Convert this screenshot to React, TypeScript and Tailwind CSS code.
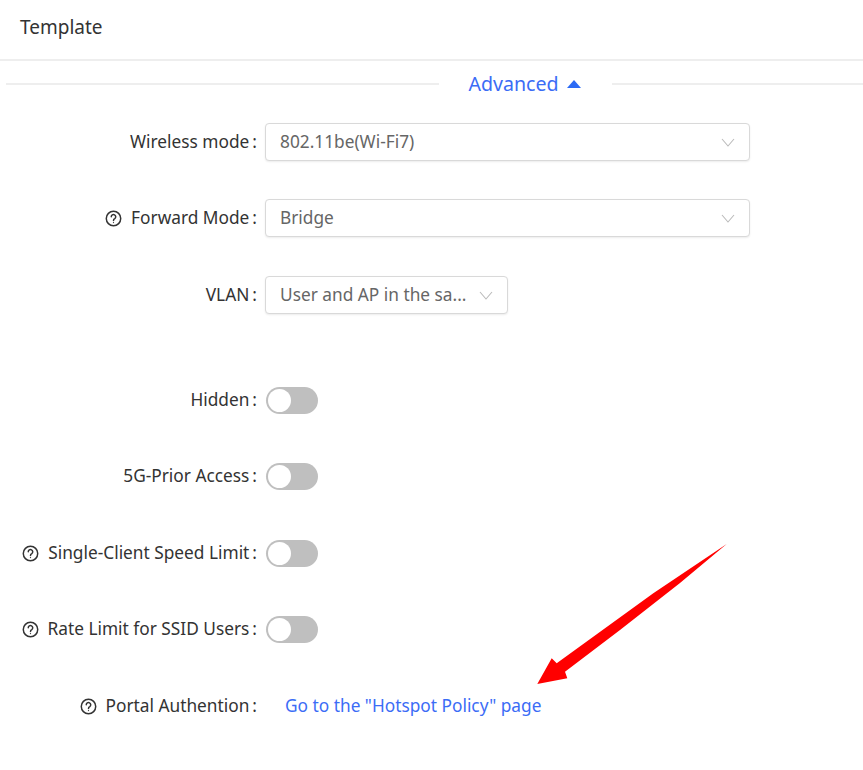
function Help() {
  return (
    <svg viewBox="0 0 16 16" className="w-[17px] h-[17px] mr-[9px] shrink-0" fill="none" stroke="#333" strokeWidth="1.4">
      <circle cx="8" cy="8" r="6.8" />
      <path d="M5.9 6.4a2.1 2.1 0 1 1 3.3 1.7c-.8.5-1.2.9-1.2 1.7" strokeLinecap="round" />
      <circle cx="8" cy="11.8" r=".6" fill="#333" stroke="none" />
    </svg>
  );
}

function Label({ text, help, up }: { text: string; help?: boolean; up?: boolean }) {
  return (
    <div className={`w-[265px] shrink-0 flex items-center justify-end pr-[7px] text-[#333] whitespace-nowrap ${up ? "pb-[1px]" : ""}`}>
      {help && <Help />}
      <span>{text}</span>
      <span className="ml-[3px] mr-[1px]">:</span>
    </div>
  );
}

function Select({ value, width }: { value: string; width: string }) {
  return (
    <div className={`${width} h-[38px] bg-white border border-[#d9d9d9] rounded-[4px] shadow-[0_1px_2px_rgba(0,0,0,0.08)] flex items-center justify-between pl-[14px] pr-[14px] text-[#666]`}>
      <span>{value}</span>
      <svg viewBox="0 0 14 9" className="w-[14px] h-[9px]" fill="none" stroke="#bbbbbb" strokeWidth="1.1">
        <path d="M1 1l6 7 6-7" />
      </svg>
    </div>
  );
}

function Toggle() {
  return (
    <div className="ml-[1px] w-[52px] h-[27px] rounded-full bg-[#bfbfbf] flex items-center pl-[2px]">
      <div className="w-[23px] h-[23px] rounded-full bg-white" />
    </div>
  );
}

export default function App() {
  return (
    <div className="relative w-[863px] h-[770px] bg-white overflow-hidden text-[17.3px]" style={{ fontFamily: '"Noto Sans", "Open Sans", sans-serif' }}>
      <div className="h-[61px] pl-[20px] pt-[13px] border-b-2 border-[#eeeeee] text-[19px] text-[#333]">Template</div>

      <div className="flex items-center h-[46px] pl-[6px]">
        <div className="w-[433px] h-[2px] bg-[#eeeeee]" />
        <div className="w-[173px] flex items-center justify-center gap-[8px] text-[#3b6cf6] text-[19.6px] pr-[2px]">
          <span className="pb-[1px]">Advanced</span>
          <svg viewBox="0 0 14 8" className="w-[14px] h-[8px]" fill="#2b6af5">
            <path d="M7 0l7 8H0z" />
          </svg>
        </div>
        <div className="flex-1 h-[2px] bg-[#eeeeee]" />
      </div>

      <div className="flex flex-col pt-[16px]">
        <div className="flex items-center h-[38px] mb-[38px]">
          <Label text="Wireless mode" />
          <Select value="802.11be(Wi-Fi7)" width="w-[485px]" />
        </div>
        <div className="flex items-center h-[38px] mb-[39px]">
          <Label text="Forward Mode" help />
          <Select value="Bridge" width="w-[485px]" />
        </div>
        <div className="flex items-center h-[38px] mb-[73px]">
          <Label text="VLAN" />
          <Select value="User and AP in the sa..." width="w-[243px]" />
        </div>
        <div className="flex items-center h-[27px] mb-[49px]">
          <Label text="Hidden" up />
          <Toggle />
        </div>
        <div className="flex items-center h-[27px] mb-[50px]">
          <Label text="5G-Prior Access" up />
          <Toggle />
        </div>
        <div className="flex items-center h-[27px] mb-[49px]">
          <Label text="Single-Client Speed Limit" help up />
          <Toggle />
        </div>
        <div className="flex items-center h-[27px] mb-[50px]">
          <Label text="Rate Limit for SSID Users" help up />
          <Toggle />
        </div>
        <div className="flex items-center h-[27px]">
          <Label text="Portal Authention" help up />
          <span className="ml-[20px] pb-[1px] text-[#3b6cf6]">Go to the "Hotspot Policy" page</span>
        </div>
      </div>

      {/* red annotation arrow */}
      <svg className="absolute left-0 top-0 pointer-events-none" width="863" height="770" viewBox="0 0 863 770">
        <path d="M537.3 684 L551.7 658.3 L556.7 663.3 L653.3 593.3 L726.7 544 L680 583 L620 630 L565 671.7 L567.3 678.3 Z" fill="#ff0000" />
      </svg>
    </div>
  );
}
